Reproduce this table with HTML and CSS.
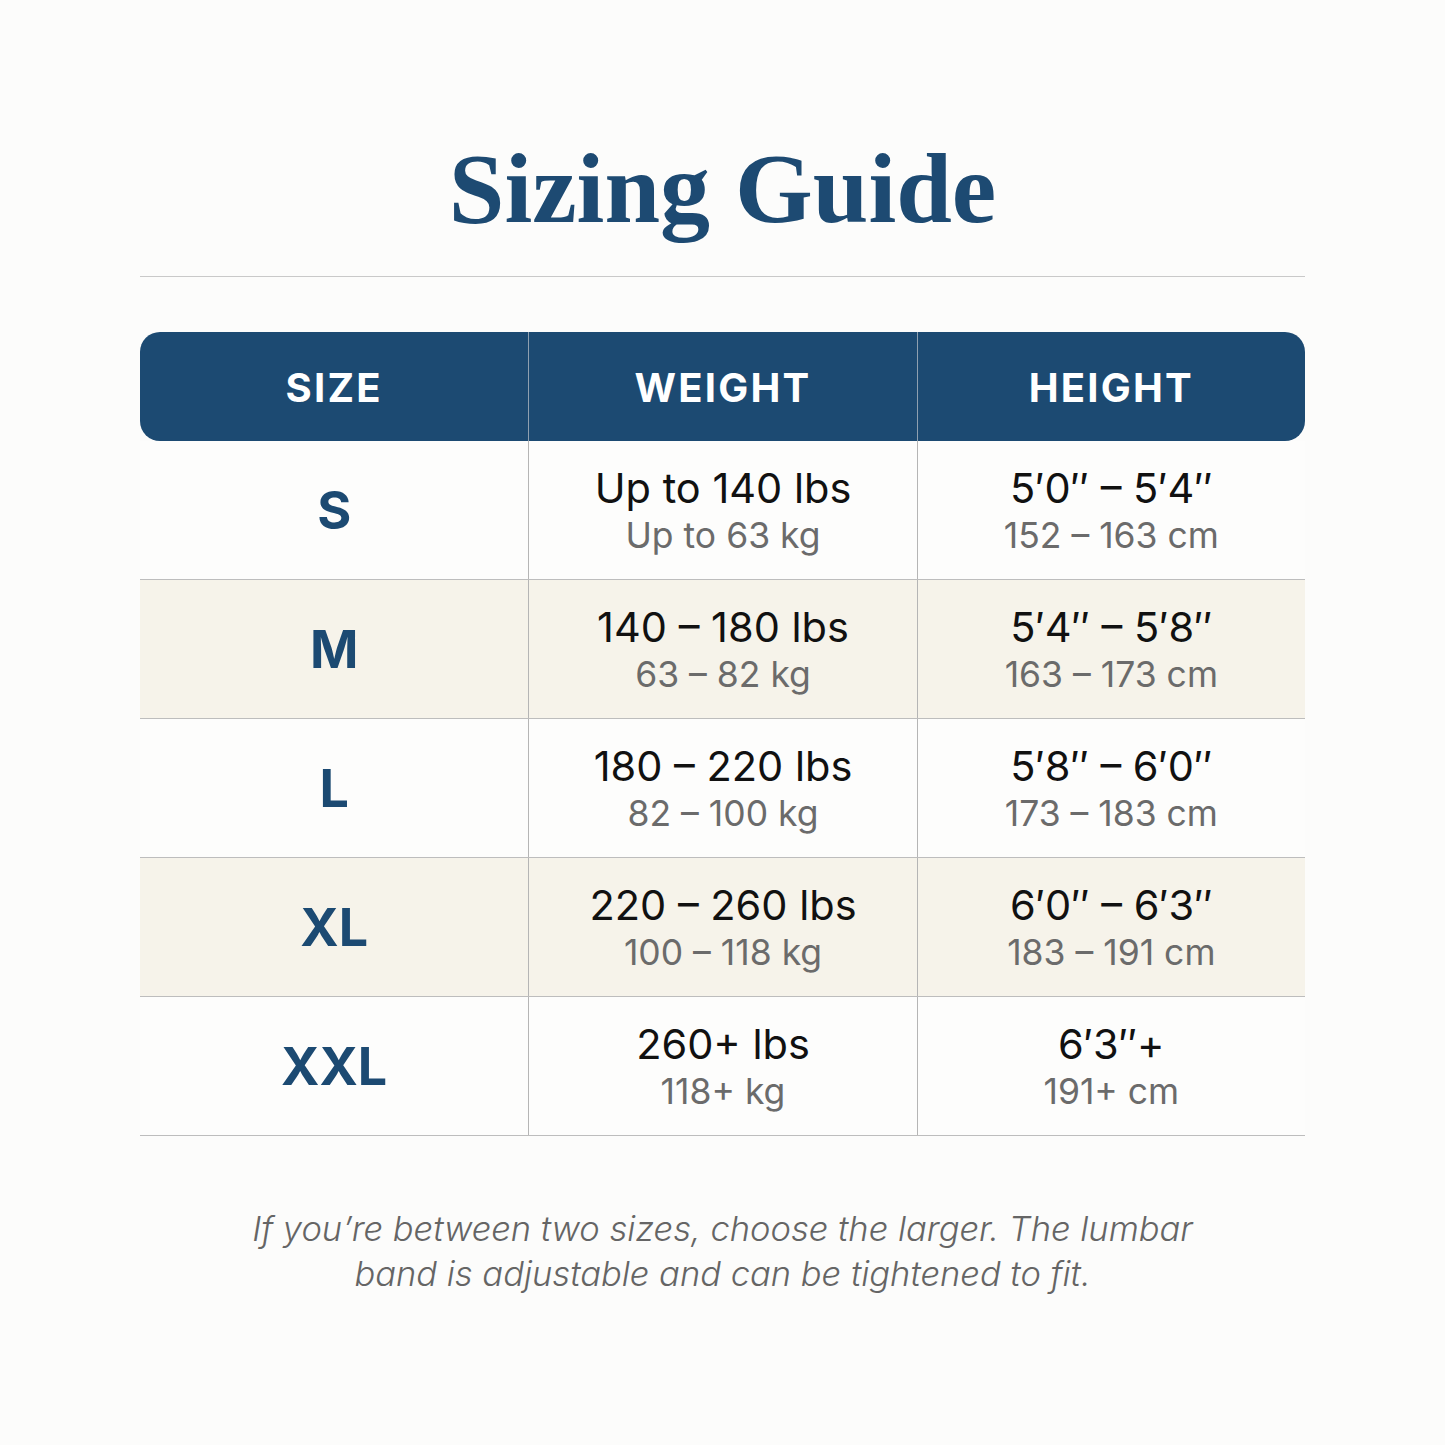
FILE: index.html
```html
<!DOCTYPE html>
<html lang="en">
<head>
<meta charset="utf-8">
<title>Sizing Guide</title>
<link rel="stylesheet" href="styles.css">
</head>
<body>
<main class="page">
  <h1 class="title">Sizing Guide</h1>
  <hr class="rule">
  <div class="chart">
    <div class="head">
      <div class="hcell">SIZE</div>
      <div class="hcell">WEIGHT</div>
      <div class="hcell">HEIGHT</div>
    </div>
    <div class="row">
      <div class="cell size">S</div>
      <div class="cell"><span class="main">Up to 140 lbs</span><span class="sub">Up to 63 kg</span></div>
      <div class="cell"><span class="main">5′0″ – 5′4″</span><span class="sub">152 – 163 cm</span></div>
    </div>
    <div class="row alt">
      <div class="cell size">M</div>
      <div class="cell"><span class="main">140 – 180 lbs</span><span class="sub">63 – 82 kg</span></div>
      <div class="cell"><span class="main">5′4″ – 5′8″</span><span class="sub">163 – 173 cm</span></div>
    </div>
    <div class="row">
      <div class="cell size">L</div>
      <div class="cell"><span class="main">180 – 220 lbs</span><span class="sub">82 – 100 kg</span></div>
      <div class="cell"><span class="main">5′8″ – 6′0″</span><span class="sub">173 – 183 cm</span></div>
    </div>
    <div class="row alt">
      <div class="cell size">XL</div>
      <div class="cell"><span class="main">220 – 260 lbs</span><span class="sub">100 – 118 kg</span></div>
      <div class="cell"><span class="main">6′0″ – 6′3″</span><span class="sub">183 – 191 cm</span></div>
    </div>
    <div class="row">
      <div class="cell size">XXL</div>
      <div class="cell"><span class="main">260+ lbs</span><span class="sub">118+ kg</span></div>
      <div class="cell"><span class="main">6′3″+</span><span class="sub">191+ cm</span></div>
    </div>
  </div>
  <p class="note">If you’re between two sizes, choose the larger. The lumbar<br>band is adjustable and can be tightened to fit.</p>
</main>
</body>
</html>
```
FILE: styles.css
```css
html, body {
  margin: 0;
  padding: 0;
  background: #fcfcfb;
}
.page {
  width: 1165px;
  margin: 0 auto;
  padding-top: 129px;
  font-family: Inter, "Noto Sans", sans-serif;
}
.title {
  margin: 0;
  text-align: center;
  font-family: "Liberation Serif", serif;
  font-weight: 700;
  font-size: 100px;
  line-height: 120px;
  color: #1d4a72;
  letter-spacing: 0;
}
.rule {
  border: 0;
  border-top: 1px solid #c9c9c9;
  margin: 27px 0 55px;
}
.chart {
  display: flex;
  flex-direction: column;
}
.head {
  display: grid;
  grid-template-columns: repeat(3, 1fr);
  height: 109px;
  background: #1c4a72;
  border-radius: 20px;
}
.hcell {
  display: flex;
  align-items: center;
  justify-content: center;
  color: #ffffff;
  font-weight: 700;
  font-size: 40px;
  letter-spacing: 2.2px;
  padding-top: 2px;
}
.hcell + .hcell {
  border-left: 1px solid #8fa0b0;
}
.row {
  display: grid;
  grid-template-columns: repeat(3, 1fr);
  height: 138px;
  border-bottom: 1px solid #bdbdbd;
  background: #fdfdfc;
}
.row.alt {
  background: #f6f3ea;
}
.cell {
  display: flex;
  flex-direction: column;
  align-items: center;
  justify-content: center;
  text-align: center;
  padding-top: 2px;
}
.cell + .cell {
  border-left: 1px solid #b5b5b5;
}
.size {
  color: #1c4a72;
  font-weight: 700;
  font-size: 52px;
  padding-top: 0;
}
.main {
  color: #111111;
  font-size: 41.5px;
  line-height: 50px;
}
.sub {
  color: #6b6b6b;
  font-size: 35.5px;
  line-height: 46px;
}
.note {
  margin: 70px auto 0;
  text-align: center;
  font-style: italic;
  font-weight: 300;
  font-size: 34.5px;
  line-height: 45px;
  color: #656565;
}
```
